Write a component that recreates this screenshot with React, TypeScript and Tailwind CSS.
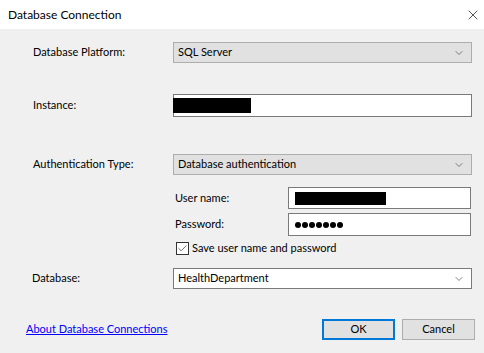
import { Check, ChevronDown, X } from "lucide-react";

const font = "font-['Segoe_UI','Lato',sans-serif]";

export default function App() {
  return (
    <div className={`flex h-[353px] w-[484px] flex-col bg-[#f0f0f0] text-[11px] text-black ${font}`}>
      <TitleBar />
      <div className="flex flex-col pt-[13px]">
        <Row label="Database Platform:">
          <ComboBox value="SQL Server" />
        </Row>

        <Row label="Instance:" className="mt-[31px]">
          <TextBox className="h-[23px] w-[299px]">
            <span className="ml-[-1px] h-[15px] w-[78px] bg-black" />
          </TextBox>
        </Row>

        <Row label="Authentication Type:" className="mt-[37px]">
          <ComboBox value="Database authentication" />
        </Row>

        <div className="ml-[175px] mt-[12px] flex flex-col">
          <SubRow label="User name:">
            <TextBox className="h-[22px] w-[183px]">
              <span className="ml-[6px] h-[13px] w-[91px] bg-black" />
            </TextBox>
          </SubRow>
          <SubRow label="Password:" className="mt-[4px]">
            <TextBox className="h-[23px] w-[183px]">
              <span className="ml-[6px] flex gap-[1px]">
                {Array.from({ length: 7 }).map((_, i) => (
                  <span key={i} className="h-[6px] w-[6px] rounded-full bg-black" />
                ))}
              </span>
            </TextBox>
          </SubRow>
          <label className="mt-[6px] flex h-[13px] items-center gap-[3px]">
            <span className="ml-[1px] flex h-[13px] w-[13px] items-center justify-center border border-[#333333] bg-white">
              <Check size={11} strokeWidth={1.6} className="text-[#333333]" />
            </span>
            <span>Save user name and password</span>
          </label>
        </div>

        <Row label="Database:" className="mt-[13px]" labelClassName="pl-[32px]">
          <ComboBox value="HealthDepartment" editable />
        </Row>

        <div className="mt-[30px] flex h-[21px] items-center pl-[26px] pr-[9px]">
          <a className="text-[#0000ff] underline underline-offset-[1px]">
            About Database Connections
          </a>
          <div className="ml-auto flex gap-[7px]">
            <button className="h-[21px] w-[73px] border-2 border-[#0078d7] bg-[#e1e1e1]">
              OK
            </button>
            <button className="h-[21px] w-[73px] border border-[#adadad] bg-[#e1e1e1]">
              Cancel
            </button>
          </div>
        </div>
      </div>
    </div>
  );
}

function TitleBar() {
  return (
    <div className="flex h-[29px] shrink-0 items-center justify-between bg-white pl-[8px] pr-[2px]">
      <span className="text-[12px]">Database Connection</span>
      <X size={16} strokeWidth={1} className="mr-[1px]" />
    </div>
  );
}

function Row({
  label,
  children,
  className = "",
  labelClassName = "pl-[33px]",
}: {
  label: string;
  children: React.ReactNode;
  className?: string;
  labelClassName?: string;
}) {
  return (
    <div className={`flex items-center ${className}`}>
      <span className={`w-[173px] shrink-0 ${labelClassName}`}>{label}</span>
      {children}
    </div>
  );
}

function SubRow({
  label,
  children,
  className = "",
}: {
  label: string;
  children: React.ReactNode;
  className?: string;
}) {
  return (
    <div className={`flex items-center ${className}`}>
      <span className="w-[113px] shrink-0">{label}</span>
      {children}
    </div>
  );
}

function TextBox({
  children,
  className = "",
}: {
  children?: React.ReactNode;
  className?: string;
}) {
  return (
    <div className={`flex items-center border border-[#7a7a7a] bg-white ${className}`}>
      {children}
    </div>
  );
}

function ComboBox({ value, editable = false }: { value: string; editable?: boolean }) {
  return (
    <div
      className={`flex h-[21px] w-[299px] items-center justify-between border pl-[4px] pr-[6px] ${
        editable ? "border-[#7a7a7a] bg-white" : "border-[#adadad] bg-[#e1e1e1]"
      }`}
    >
      <span>{value}</span>
      <ChevronDown size={12} strokeWidth={1.3} className="text-[#444444]" />
    </div>
  );
}
